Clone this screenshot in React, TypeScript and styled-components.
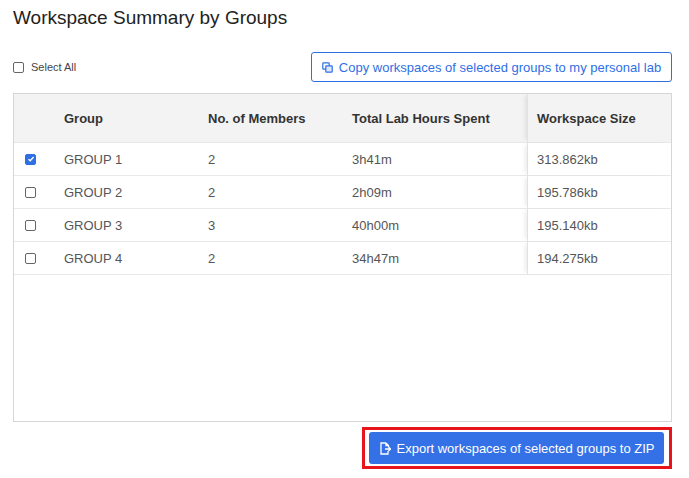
import React from "react";
import styled, { createGlobalStyle } from "styled-components";

const Global = createGlobalStyle`
  body { margin: 0; font-family: "Liberation Sans", Arial, sans-serif; background: #fff; }
`;
const Page = styled.div`padding: 6px 17px 0 13px; width: 659px;`;
const Title = styled.h1`margin: 0; font-size: 19px; font-weight: 400; color: #222; height: 26px; line-height: 24px;`;
const Bar = styled.div`display: flex; justify-content: space-between; align-items: center; margin-top: 20px; height: 30px;`;
const Check = styled.span<{ $on?: boolean }>`
  width: 9px; height: 9px; border: 1px solid ${p => (p.$on ? "#2f6fe4" : "#666")}; border-radius: 2px;
  background: ${p => (p.$on ? "#2f6fe4" : "#fff")}; display: inline-flex; align-items: center; justify-content: center;
`;
const SelectAll = styled.label`display: flex; align-items: center; gap: 7px; font-size: 11px; color: #444;`;
const OutlineBtn = styled.button`
  height: 30px; width: 361px; border: 1px solid #2f6fe4; border-radius: 3px; background: #fff; color: #2f6fe4;
  font: 13px "Liberation Sans", Arial, sans-serif; display: flex; align-items: center; justify-content: center; gap: 6px;
`;
const TableBox = styled.div`margin-top: 11px; border: 1px solid #d4d6da; height: 327px; overflow: hidden;`;
const Row = styled.div<{ $head?: boolean }>`
  display: grid; grid-template-columns: 50px 144px 144px 175px 1fr;
  height: ${p => (p.$head ? 48 : 32)}px; align-items: center;
  background: ${p => (p.$head ? "#f3f3f3" : "#fff")};
  border-bottom: 1px solid #e8e8e8;
  font-size: 13px; color: ${p => (p.$head ? "#333" : "#555")}; font-weight: ${p => (p.$head ? 700 : 400)};
`;
const Cell = styled.div<{ $last?: boolean }>`
  height: 100%; display: flex; align-items: center;
  ${p => p.$last && "border-left: 1px solid #e2e2e2; box-shadow: -4px 0 4px -2px rgba(0,0,0,0.08); padding-left: 9px;"}
`;
const CheckCell = styled(Cell)`padding-left: 11px;`;
const Footer = styled.div`display: flex; justify-content: flex-end; margin-top: 5px;`;
const Highlight = styled.div`border: 3px solid #e8141c; padding: 2px 5px 2px 4px;`;
const SolidBtn = styled.button`
  height: 32px; width: 295px; border: 0; border-radius: 3px; background: #3571e6; color: #fff;
  font: 13px "Liberation Sans", Arial, sans-serif; display: flex; align-items: center; justify-content: center; gap: 6px;
`;

const rows = [
  ["GROUP 1", "2", "3h41m", "313.862kb", true],
  ["GROUP 2", "2", "2h09m", "195.786kb", false],
  ["GROUP 3", "3", "40h00m", "195.140kb", false],
  ["GROUP 4", "2", "34h47m", "194.275kb", false],
] as const;

const Tick = () => (
  <svg width="8" height="8" viewBox="0 0 8 8"><path d="M1.5 4.2 3.2 5.8 6.6 2" stroke="#fff" strokeWidth="1.3" fill="none" /></svg>
);

export default function App() {
  return (
    <Page>
      <Global />
      <Title>Workspace Summary by Groups</Title>
      <Bar>
        <SelectAll><Check />Select All</SelectAll>
        <OutlineBtn>
          <svg width="11" height="11" viewBox="0 0 11 11" fill="none" stroke="#2f6fe4" strokeWidth="1.2">
            <rect x="0.8" y="0.8" width="6.4" height="6.4" rx="0.8" />
            <rect x="3.8" y="3.8" width="6.4" height="6.4" rx="0.8" fill="#dfe8fb" />
          </svg>
          Copy workspaces of selected groups to my personal lab
        </OutlineBtn>
      </Bar>
      <TableBox>
        <Row $head>
          <Cell />
          <Cell>Group</Cell>
          <Cell>No. of Members</Cell>
          <Cell>Total Lab Hours Spent</Cell>
          <Cell $last>Workspace Size</Cell>
        </Row>
        {rows.map(r => (
          <Row key={r[0]}>
            <CheckCell><Check $on={r[4]}>{r[4] && <Tick />}</Check></CheckCell>
            <Cell>{r[0]}</Cell>
            <Cell>{r[1]}</Cell>
            <Cell>{r[2]}</Cell>
            <Cell $last>{r[3]}</Cell>
          </Row>
        ))}
      </TableBox>
      <Footer>
        <Highlight>
          <SolidBtn>
            <svg width="12" height="13" viewBox="0 0 12 13" fill="none" stroke="#fff" strokeWidth="1.3">
              <path d="M7 1H2v11h7V9M7 1l2.5 2.5V5M7 1v2.5h2.5" />
              <path d="M6 7h5.5M9.5 5l2 2-2 2" />
            </svg>
            Export workspaces of selected groups to ZIP
          </SolidBtn>
        </Highlight>
      </Footer>
    </Page>
  );
}
